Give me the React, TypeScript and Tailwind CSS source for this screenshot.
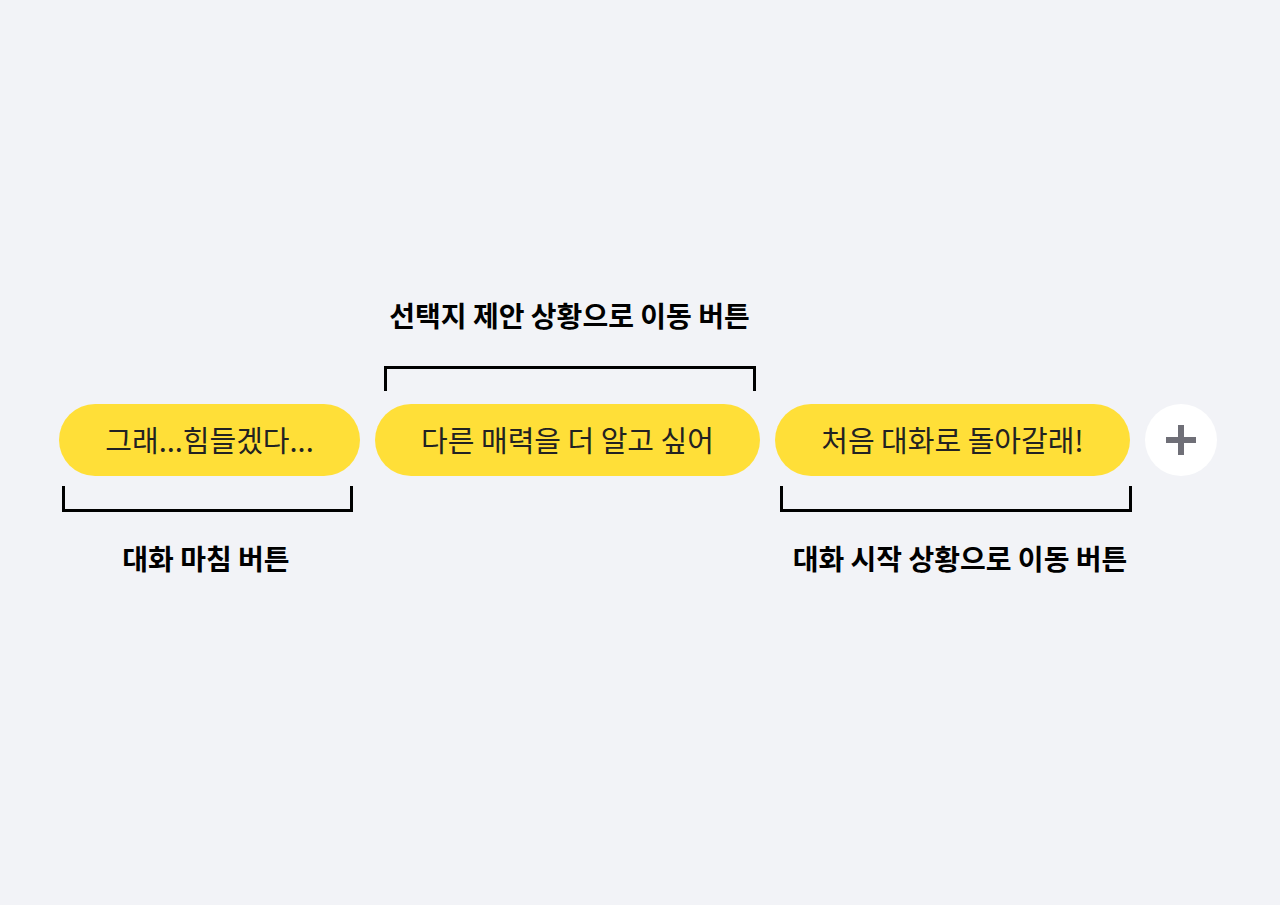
const FONT = "font-['Noto_Sans_CJK_KR','Noto_Sans',sans-serif]";

type Note = { text: string; bracket: string; shift?: string };

type Choice = {
  label: string;
  width: string;
  top?: Note;
  bottom?: Note;
};

const CHOICES: Choice[] = [
  {
    label: "그래...힘들겠다...",
    width: "w-[301px]",
    bottom: { text: "대화 마침 버튼", bracket: "ml-[3px] w-[291px]", shift: "pr-[7px]" },
  },
  {
    label: "다른 매력을 더 알고 싶어",
    width: "w-[385px]",
    top: { text: "선택지 제안 상황으로 이동 버튼", bracket: "ml-[9px] w-[372px]", shift: "pl-[4px]" },
  },
  {
    label: "처음 대화로 돌아갈래!",
    width: "w-[355px]",
    bottom: { text: "대화 시작 상황으로 이동 버튼", bracket: "ml-[5px] w-[352px]", shift: "pl-[15px]" },
  },
];

function PlusButton() {
  return (
    <div className="w-[72px] h-[72px] rounded-full bg-white flex items-center justify-center">
      <svg width="32" height="32" viewBox="0 0 32 32" aria-hidden>
        <path d="M16 1v30M1 16h30" stroke="#6f6f77" strokeWidth="6" />
      </svg>
    </div>
  );
}

export default function App() {
  return (
    <div className={`${FONT} w-full h-[905px] bg-[#f2f3f7] pt-[290px] pl-[59px]`}>
      <div className="flex items-start gap-[15px]">
        {CHOICES.map((c) => (
          <div key={c.label} className={`${c.width} flex flex-col`}>
            <div className="h-[114px] flex flex-col">
              {c.top && (
                <>
                  <div
                    className={`${c.top.shift ?? ""} h-[50px] flex items-center justify-center text-[28px] font-bold text-black whitespace-nowrap`}
                  >
                    {c.top.text}
                  </div>
                  <div className="h-[26px]" />
                  <div className={`${c.top.bracket} h-[25px] border-t-[3px] border-x-[3px] border-black`} />
                </>
              )}
            </div>
            <button
              type="button"
              className="h-[72px] rounded-full bg-[#ffdf38] flex items-center justify-center text-[29px] text-[#222] whitespace-nowrap"
            >
              {c.label}
            </button>
            <div className="pt-[10px] flex flex-col">
              {c.bottom && (
                <>
                  <div className={`${c.bottom.bracket} h-[26px] border-b-[3px] border-x-[3px] border-black`} />
                  <div
                    className={`${c.bottom.shift ?? ""} mt-[23px] h-[46px] flex items-center justify-center text-[28px] font-bold text-black whitespace-nowrap`}
                  >
                    {c.bottom.text}
                  </div>
                </>
              )}
            </div>
          </div>
        ))}
        <div className="pt-[114px]">
          <PlusButton />
        </div>
      </div>
    </div>
  );
}
